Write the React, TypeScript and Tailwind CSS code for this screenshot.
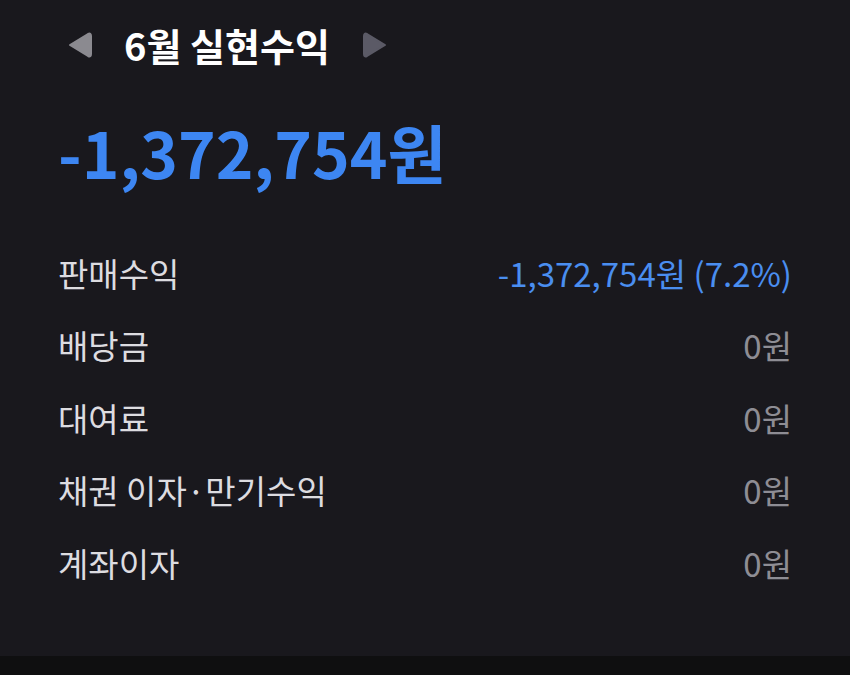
import React from 'react';

const rows = [
  { label: '판매수익', value: '-1,372,754원 (7.2%)', blue: true },
  { label: '배당금', value: '0원' },
  { label: '대여료', value: '0원' },
  { label: '채권 이자·만기수익', value: '0원' },
  { label: '계좌이자', value: '0원' },
];

function Arrow({ dir, color }: { dir: 'left' | 'right'; color: string }) {
  return (
    <svg width="26" height="30" viewBox="0 0 26 30" className="shrink-0">
      {dir === 'left' ? (
        <path d="M3 15 L21 4 Q24 2.5 24 6 L24 24 Q24 27.5 21 26 Z" fill={color} stroke={color} strokeWidth="2" strokeLinejoin="round" />
      ) : (
        <path d="M23 15 L5 4 Q2 2.5 2 6 L2 24 Q2 27.5 5 26 Z" fill={color} stroke={color} strokeWidth="2" strokeLinejoin="round" />
      )}
    </svg>
  );
}

export default function App() {
  return (
    <div
      className="w-[850px] h-[675px] flex flex-col bg-[#19181d] overflow-hidden"
      style={{ fontFamily: '"Noto Sans CJK KR", "Noto Sans", sans-serif' }}
    >
      <div className="flex-1 px-[58px] pt-[20px]">
        <div className="flex items-center h-[50px]">
          <div className="ml-[9px]"><Arrow dir="left" color="#8b8a90" /></div>
          <h1 className="ml-[31px] text-[38px] font-bold text-white leading-none">6월 실현수익</h1>
          <div className="ml-[32px]"><Arrow dir="right" color="#5b5a66" /></div>
        </div>
        <div className="mt-[45px] h-[72px] flex items-center text-[64px] font-semibold text-[#3d86f2] leading-none">
          -1,372,754원
        </div>
        <div className="mt-[50px] flex flex-col">
          {rows.map((r) => (
            <div key={r.label} className="h-[72.5px] flex items-center justify-between text-[33px] leading-none">
              <span className="text-[#dddce0]">{r.label}</span>
              <span className={r.blue ? 'text-[#4a8ef0]' : 'text-[#8e8d94]'}>{r.value}</span>
            </div>
          ))}
        </div>
      </div>
      <div className="h-[19px] bg-[#0f0f10]" />
    </div>
  );
}
